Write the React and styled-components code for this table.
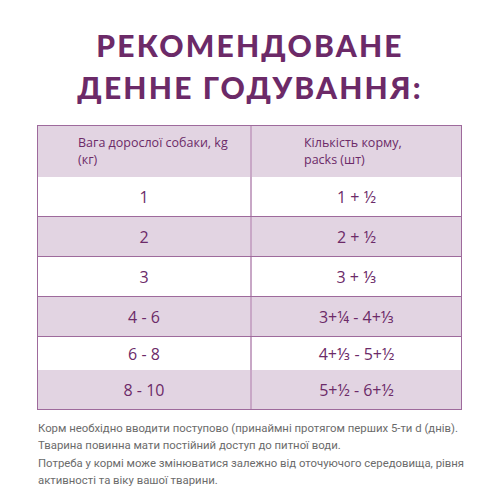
import React from "react";
import styled, { createGlobalStyle } from "styled-components";

const Global = createGlobalStyle`
  html, body { margin: 0; padding: 0; background: #fff; }
  body { font-family: "Open Sans", "Noto Sans", sans-serif; }
`;

const Page = styled.div`
  width: 500px;
  height: 500px;
  box-sizing: border-box;
  padding-top: 24px;
  background: #fff;
  overflow: hidden;
`;

const Title = styled.h1`
  margin: 0;
  text-align: center;
  font-family: "Lato", sans-serif;
  font-weight: 900;
  font-size: 30px;
  line-height: 42px;
  letter-spacing: 2.2px;
  color: #6c2a68;
`;

const Table = styled.div`
  margin: 17px 38px 0 37px;
  border: 1px solid #9e6a9c;
  display: flex;
  flex-direction: column;
`;

const Row = styled.div`
  display: grid;
  grid-template-columns: 212px 1fr;
  height: ${(p) => p.$h}px;
  background: ${(p) => (p.$shade ? "#e2d4e2" : "#ffffff")};
  border-top: ${(p) => (p.$line ? "1px solid #9e6a9c" : "none")};
  box-sizing: border-box;
`;

const Cell = styled.div`
  display: flex;
  align-items: center;
  justify-content: center;
  font-family: "Open Sans", "Noto Sans", sans-serif;
  font-size: 16px;
  color: #6c2a68;
  border-left: ${(p) => (p.$divider ? "2px solid #c8a7c6" : "none")};
`;

const HeadCell = styled.div`
  display: flex;
  align-items: center;
  padding-left: ${(p) => p.$pad}px;
  padding-bottom: 2px;
  font-family: "Open Sans", "Noto Sans", sans-serif;
  font-size: 12.5px;
  line-height: 17px;
  color: #6c2a68;
  border-left: ${(p) => (p.$divider ? "2px solid #c8a7c6" : "none")};
`;

const Notes = styled.div`
  margin: 10px 10px 0 38px;
  font-family: "Roboto", "Noto Sans", sans-serif;
  font-size: 11.35px;
  line-height: 17.4px;
  color: #6b6b6b;
  white-space: nowrap;
`;

const rows = [
  { a: "1", b: "1 + ½", shade: false, line: false, h: 39 },
  { a: "2", b: "2 + ½", shade: true, line: true, h: 40 },
  { a: "3", b: "3 + ⅓", shade: false, line: true, h: 40 },
  { a: "4 - 6", b: "3+¼ - 4+⅓", shade: true, line: true, h: 40 },
  { a: "6 - 8", b: "4+⅓ - 5+½", shade: false, line: true, h: 34 },
  { a: "8 - 10", b: "5+½ - 6+½", shade: true, line: false, h: 39 },
];

export default function App() {
  return (
    <Page>
      <Global />
      <Title>
        РЕКОМЕНДОВАНЕ
        <br />
        ДЕННЕ ГОДУВАННЯ:
      </Title>
      <Table>
        <Row $h={51} $shade>
          <HeadCell $pad={40}>
            Вага дорослої собаки, kg
            <br />
            (кг)
          </HeadCell>
          <HeadCell $pad={52} $divider>
            Кількість корму,
            <br />
            packs (шт)
          </HeadCell>
        </Row>
        {rows.map((r, i) => (
          <Row key={i} $h={r.h} $shade={r.shade} $line={r.line}>
            <Cell>{r.a}</Cell>
            <Cell $divider>{r.b}</Cell>
          </Row>
        ))}
      </Table>
      <Notes>
        Корм необхідно вводити поступово (принаймні протягом перших 5-ти d (днів).
        <br />
        Тварина повинна мати постійний доступ до питної води.
        <br />
        Потреба у кормі може змінюватися залежно від оточуючого середовища, рівня
        <br />
        активності та віку вашої тварини.
      </Notes>
    </Page>
  );
}
